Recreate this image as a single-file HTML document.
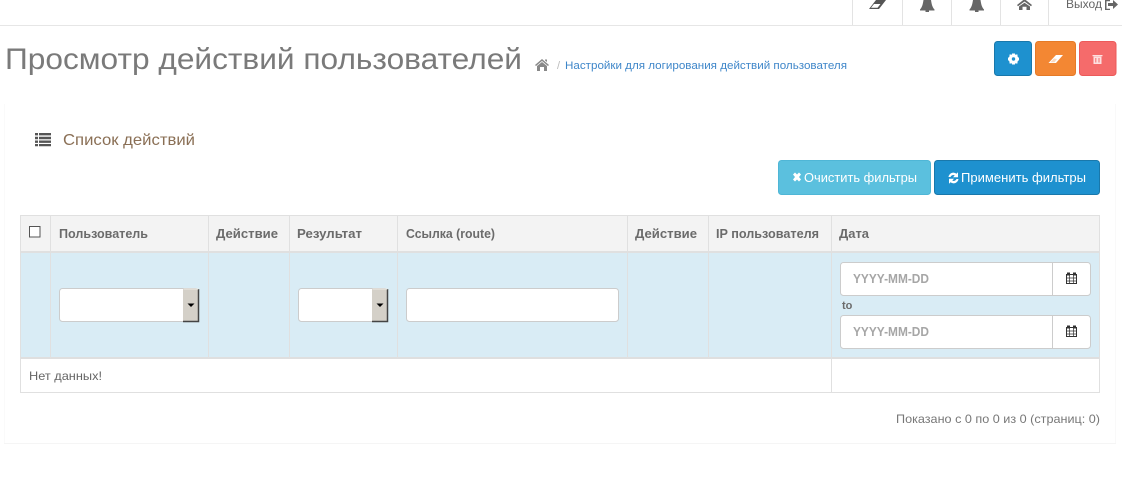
<!DOCTYPE html>
<html><head><meta charset="utf-8"><style>
html,body{margin:0;padding:0;background:#fff;width:1122px;height:479px;overflow:hidden}
svg{display:block}
text{font-family:"Liberation Sans","DejaVu Sans",sans-serif;fill:#666}
.th{font-size:13px;font-weight:bold;fill:#6b6b6b}
</style></head><body>
<svg width="1122" height="479" viewBox="0 0 1122 479" xmlns="http://www.w3.org/2000/svg">
<rect x="0" y="25" width="1122" height="1" fill="#e6e6e6"/>
<g fill="#e3e3e3"><rect x="852" y="0" width="1" height="25"/><rect x="902" y="0" width="1" height="25"/><rect x="951" y="0" width="1" height="25"/><rect x="1000" y="0" width="1" height="25"/><rect x="1048" y="0" width="1" height="25"/></g>
<path d="M869 9L876 0H886L879 9Z M871 7.800H877.500L880.500 4H874Z" fill="#555" fill-rule="evenodd"/>
<path d="M920 9.500C922.500 7 923 3 923.500 0H931C931.500 3 932 7 934.500 9.500V10.500H920Z M925.500 10.500H929V12H925.500Z" fill="#666"/>
<path d="M969.500 9.500C972 7 972.500 3 973 0H980.500C981 3 981.500 7 984 9.500V10.500H969.500Z M975 10.500H978.500V12H975Z" fill="#666"/>
<path d="M1017 5L1024.500 -1L1032 5L1031 6.200L1024.500 1.500L1018 6.200Z M1019 6.500L1024.500 2.800L1030 6.500V10H1026.500V6.800H1022.500V10H1019Z" fill="#666"/>
<text x="1066" y="8" font-size="12" fill="#666" textLength="36" lengthAdjust="spacingAndGlyphs">Выход</text>
<path d="M1110 0H1105V10H1110V8.800H1106.500V1.200H1110Z M1108 3H1113V0L1118 4.500L1113 9V6H1108Z" fill="#666"/>

<text x="5" y="69" font-size="30" style="fill:#7a7a7a" textLength="517" lengthAdjust="spacingAndGlyphs">Просмотр действий пользователей</text>
<path d="M535 65L542 59L549 65L548 66L542 61L536 66Z M537 66L542 62L547 66V71H544V67H540V71H537Z M545 59.500H547V62L545 60.500Z" fill="#888"/>
<text x="557" y="69" font-size="11" style="fill:#bbb">/</text>
<text x="565" y="69" font-size="11" style="fill:#3e86c9" textLength="282" lengthAdjust="spacingAndGlyphs">Настройки для логирования действий пользователя</text>

<rect x="994.500" y="41.500" width="37" height="34" rx="3" fill="#1e91cf" stroke="#1978ab"/>
<rect x="1035.500" y="41.500" width="40" height="34" rx="3" fill="#f38733" stroke="#e57a27"/>
<rect x="1079.500" y="41.500" width="36.500" height="34" rx="3" fill="#f56b6b" stroke="#ec5a5a"/>
<circle cx="1013.500" cy="59" r="3.300" fill="none" stroke="#fff" stroke-width="3.200"/>
<path d="M1012 53.500h3v1.500h-3z M1012 63h3v1.500h-3z M1008 57.500h1.500v3H1008z M1017.500 57.500h1.500v3h-1.500z M1009.500 54.500l1.500 0 0 1.500-1.500 0z M1016 54.500l1.500 0 0 1.500-1.500 0z M1009.500 62l1.500 0 0 1.500-1.500 0z M1016 62l1.500 0 0 1.500-1.500 0z" fill="#fff"/>
<path d="M1048.500 63L1056 55H1063L1056 63Z" fill="#fff"/>
<path d="M1050.500 62.200L1054 58.500L1057 59L1054.500 62.200Z" fill="#fbd9bf"/>
<path d="M1092.500 55h10v1.300h-10z M1093.500 56.500h8V64h-8z" fill="#fde0e0"/>
<path d="M1095.300 58v4.500h1v-4.500z M1098.500 58v4.500h1v-4.500z" fill="#f56b6b"/>

<rect x="4" y="104" width="1" height="339" fill="#fafafa"/>
<rect x="1115" y="104" width="1" height="339" fill="#f9f9f9"/>
<rect x="4" y="443" width="1112" height="1" fill="#f5f5f5"/>
<path d="M35 133h3v2.400h-3z M39 133h12v2.400H39z M35 136.800h3v2.400h-3z M39 136.800h12v2.400H39z M35 140.500h3v2.400h-3z M39 140.500h12v2.400H39z M35 144h3v2.200h-3z M39 144h12v2.200H39z" fill="#555"/>
<text x="63" y="145" font-size="16" style="fill:#8a6f55" textLength="132" lengthAdjust="spacingAndGlyphs">Список действий</text>

<rect x="778.500" y="160.500" width="152" height="34" rx="3" fill="#5bc0de" stroke="#4fb6d6"/>
<rect x="934.500" y="160.500" width="165" height="34" rx="3" fill="#1e91cf" stroke="#1978ab"/>
<path d="M793 174.500l2-2 2 2 2-2 2 2-2 2.500 2 2.500-2 2-2-2-2 2-2-2 2-2.500z" fill="#fff"/>
<text x="804" y="182" font-size="13" style="fill:#fff" textLength="113" lengthAdjust="spacingAndGlyphs">Очистить фильтры</text>
<path d="M948.500 177a5 5 0 0 1 8-3.300l1.500-1.500v5h-5l1.700-1.700a2.800 2.800 0 0 0-4.200 1.500z M958.500 179a5 5 0 0 1-8 3.300l-1.500 1.500v-5h5l-1.700 1.700a2.800 2.800 0 0 0 4.200-1.500z" fill="#fff"/>
<text x="961" y="182" font-size="13" style="fill:#fff" textLength="125" lengthAdjust="spacingAndGlyphs">Применить фильтры</text>

<rect x="20" y="215" width="1080" height="37" fill="#f3f3f3"/>
<rect x="20" y="252" width="1080" height="106" fill="#d9ecf5"/>
<rect x="20" y="251" width="1080" height="2" fill="#e0e0e0"/>
<rect x="20" y="357" width="1080" height="2" fill="#dfdfdf"/>
<rect x="20.500" y="215.500" width="1079" height="177" fill="none" stroke="#e0e0e0"/>
<g fill="#e0e0e0">
<rect x="50" y="215" width="1" height="143"/><rect x="208" y="215" width="1" height="143"/><rect x="289" y="215" width="1" height="143"/><rect x="397" y="215" width="1" height="143"/><rect x="627" y="215" width="1" height="143"/><rect x="708" y="215" width="1" height="143"/><rect x="831" y="215" width="1" height="178"/>
</g>
<rect x="29.500" y="226.500" width="10.500" height="10.500" fill="#fff" stroke="#555"/>
<text class="th" x="59" y="238" textLength="89" lengthAdjust="spacingAndGlyphs">Пользователь</text>
<text class="th" x="216" y="238" textLength="62" lengthAdjust="spacingAndGlyphs">Действие</text>
<text class="th" x="297" y="238" textLength="65" lengthAdjust="spacingAndGlyphs">Результат</text>
<text class="th" x="406" y="238" textLength="89" lengthAdjust="spacingAndGlyphs">Ссылка (route)</text>
<text class="th" x="635" y="238" textLength="62" lengthAdjust="spacingAndGlyphs">Действие</text>
<text class="th" x="716" y="238" textLength="103" lengthAdjust="spacingAndGlyphs">IP пользователя</text>
<text class="th" x="839" y="238" textLength="30" lengthAdjust="spacingAndGlyphs">Дата</text>

<rect x="59.500" y="288.500" width="139" height="33" rx="3" fill="#fff" stroke="#ccc"/>
<rect x="183" y="289" width="16" height="32.500" fill="#d4d0c8"/>
<path d="M198.500 289v32.500H183" fill="none" stroke="#444" stroke-width="1.500"/>
<path d="M183.500 289h15" fill="none" stroke="#eeeae2"/>
<path d="M187.500 303.500h7l-3.500 3.500z" fill="#000"/>

<rect x="298.500" y="288.500" width="89" height="33" rx="3" fill="#fff" stroke="#ccc"/>
<rect x="372" y="289" width="16" height="32.500" fill="#d4d0c8"/>
<path d="M387.500 289v32.500H372" fill="none" stroke="#444" stroke-width="1.500"/>
<path d="M372.500 289h15" fill="none" stroke="#eeeae2"/>
<path d="M376.500 303.500h7l-3.500 3.500z" fill="#000"/>

<rect x="406.500" y="288.500" width="212" height="33" rx="3" fill="#fff" stroke="#ccc"/>

<rect x="840.500" y="262.500" width="250" height="33" rx="3" fill="#fff" stroke="#ccc"/>
<rect x="1052" y="263" width="1" height="32" fill="#ccc"/>
<text x="853" y="283" font-size="12.500" font-weight="bold" style="fill:#a6a6a6" textLength="76" lengthAdjust="spacingAndGlyphs">YYYY-MM-DD</text>
<rect x="840.500" y="315.500" width="250" height="33" rx="3" fill="#fff" stroke="#ccc"/>
<rect x="1052" y="316" width="1" height="32" fill="#ccc"/>
<text x="853" y="336" font-size="12.500" font-weight="bold" style="fill:#a6a6a6" textLength="76" lengthAdjust="spacingAndGlyphs">YYYY-MM-DD</text>
<text x="842" y="309" font-size="11" font-weight="bold" style="fill:#6b6b6b">to</text>

<g fill="none" stroke="#333">
<rect x="1066.500" y="274.500" width="10" height="9"/><path d="M1067 278h9M1067 281h9M1069.500 275v8M1073.500 275v8" stroke-width=".7"/>
<rect x="1066.500" y="327.500" width="10" height="9"/><path d="M1067 331h9M1067 334h9M1069.500 328v8M1073.500 328v8" stroke-width=".7"/>
</g>
<path d="M1067 272.500h3v3h-3z M1073 272.500h3v3h-3z M1067 325.500h3v3h-3z M1073 325.500h3v3h-3z" fill="#333"/>

<text x="29" y="380" font-size="12" style="fill:#666" textLength="73" lengthAdjust="spacingAndGlyphs">Нет данных!</text>
<text x="896" y="423" font-size="12" style="fill:#777" textLength="204" lengthAdjust="spacingAndGlyphs">Показано с 0 по 0 из 0 (страниц: 0)</text>
</svg>
</body></html>
